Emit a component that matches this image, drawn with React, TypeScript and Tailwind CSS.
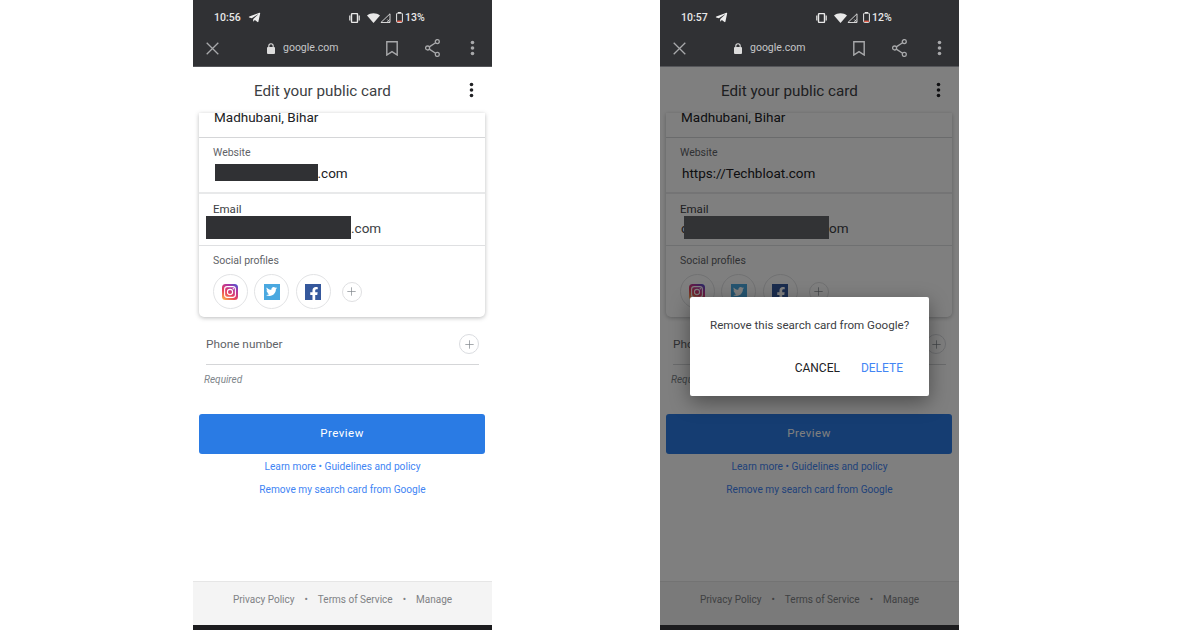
import { Plus } from "lucide-react";
import { FaFacebookF, FaTelegramPlane, FaTwitter } from "react-icons/fa";

function Dots({ className }: { className: string }) {
  return (
    <svg width="5" height="16" viewBox="0 0 5 16" className={className} fill="currentColor">
      <circle cx="2.5" cy="2.5" r="1.8" />
      <circle cx="2.5" cy="8" r="1.8" />
      <circle cx="2.5" cy="13.5" r="1.8" />
    </svg>
  );
}

function StatusIcons({ level }: { level: string }) {
  return (
    <div className="flex items-center text-[#e8e8e8]">
      <svg width="13" height="10" viewBox="0 0 13 10" fill="currentColor" className="mr-[6px]">
        <rect x="3.5" y="0.5" width="6" height="9" rx="1" fill="none" stroke="currentColor" strokeWidth="1.4" />
        <rect x="1.2" y="2.5" width="1.2" height="5" />
        <rect x="10.6" y="2.5" width="1.2" height="5" />
      </svg>
      <svg width="13" height="10" viewBox="0 0 13 10" fill="currentColor">
        <path d="M0 2.6C3.6-.6 9.4-.6 13 2.6L6.5 10z" />
      </svg>
      <svg width="11" height="10" viewBox="0 0 11 10" fill="none" stroke="currentColor" strokeWidth="0.9">
        <path d="M10 0.8V9.5H0.9z" />
        <path d="M7.2 6.4l2.4 2.6M9.6 6.4l-2.4 2.6" strokeWidth="0.7" />
      </svg>
      <svg width="7" height="11" viewBox="0 0 7 11" className="ml-[5px]">
        <rect x="0.6" y="1.2" width="5.8" height="9.2" rx="0.8" fill="none" stroke="currentColor" strokeWidth="1" />
        <rect x="2" y="0" width="3" height="1.2" fill="currentColor" />
        <rect x="1.2" y="8.6" width="4.6" height="1.4" fill="#e8604c" />
      </svg>
      <span className="ml-[2px] text-[10.5px] font-medium">{level}</span>
    </div>
  );
}

function Instagram({ id }: { id: string }) {
  return (
    <svg width="16" height="16" viewBox="0 0 16 16">
      <defs>
        <linearGradient id={id} x1="0.1" y1="1" x2="0.8" y2="0">
          <stop offset="0" stopColor="#fdb44b" />
          <stop offset="0.4" stopColor="#e8405a" />
          <stop offset="0.75" stopColor="#b5359f" />
          <stop offset="1" stopColor="#5b4fc9" />
        </linearGradient>
      </defs>
      <rect width="16" height="16" rx="3.5" fill={`url(#${id})`} />
      <rect x="2.6" y="2.6" width="10.8" height="10.8" rx="2.6" fill="none" stroke="#fff" strokeWidth="1.1" />
      <circle cx="8" cy="8" r="2.6" fill="none" stroke="#fff" strokeWidth="1.1" />
      <circle cx="11.3" cy="4.7" r="0.7" fill="#fff" />
    </svg>
  );
}

function SocialCircle({ children }: { children: React.ReactNode }) {
  return (
    <div className="flex h-[35px] w-[35px] items-center justify-center rounded-full border border-[#e2e3e5]">
      {children}
    </div>
  );
}

function Phone({
  time,
  level,
  website,
  email,
  dimmed,
}: {
  time: string;
  level: string;
  website: React.ReactNode;
  email: React.ReactNode;
  dimmed?: boolean;
}) {
  return (
    <div className="relative flex h-[630px] w-[299px] shrink-0 flex-col overflow-hidden bg-white">
      {/* Status bar and browser toolbar */}
      <div className="h-[67px] shrink-0 border-b border-[#55565a] bg-[#303134]">
        <div className="flex h-[34px] items-center pt-[1px] pl-[21px]">
          <span className="w-[26px] text-[10.5px] font-medium text-[#e8e8e8]">{time}</span>
          <FaTelegramPlane className="ml-[8px] text-[13px] text-[#efefef]" />
          <div className="ml-[87px]">
            <StatusIcons level={level} />
          </div>
        </div>
        <div className="flex h-[28px] items-center">
          <svg width="13" height="13" viewBox="0 0 13 13" className="ml-[13px] text-[#a8a9ab]" stroke="currentColor" strokeWidth="1.3" fill="none">
            <path d="M0.7 0.7l11.6 11.6M12.3 0.7L0.7 12.3" />
          </svg>
          <svg width="8" height="11" viewBox="0 0 8 11" className="ml-[48px] text-[#dcdcdc]" fill="currentColor">
            <rect x="0" y="4" width="8" height="7" rx="1" />
            <path d="M1.8 4.5V3a2.2 2.2 0 0 1 4.4 0v1.5" fill="none" stroke="currentColor" strokeWidth="1.1" />
          </svg>
          <span className="ml-[8px] w-[54px] whitespace-nowrap text-[10.5px] text-[#c4c5c7]">google.com</span>
          <svg width="12" height="15" viewBox="0 0 12 15" className="ml-[49px] text-[#a8a9ab]" stroke="currentColor" strokeWidth="1.4" fill="none">
            <path d="M0.8 0.8H11.2V14L6 10.6 0.8 14z" />
          </svg>
          <svg width="15" height="18" viewBox="0 0 15 18" className="ml-[27px] text-[#a8a9ab]" stroke="currentColor" strokeWidth="1.3" fill="none">
            <circle cx="12.3" cy="2.6" r="2" />
            <circle cx="2.6" cy="9" r="2" />
            <circle cx="12.3" cy="15.4" r="2" />
            <path d="M10.6 3.7L4.3 7.9M4.3 10.1l6.3 4.2" />
          </svg>
          <Dots className="ml-[30px] text-[#a8a9ab]" />
        </div>
      </div>

      {/* Page header */}
      <div className="flex h-[46px] shrink-0 items-center pl-[61px] pt-[2px]">
        <span className="w-[137px] whitespace-nowrap text-[15.2px] text-[#3c4043]">Edit your public card</span>
        <Dots className="ml-[78px] -mt-[2px] text-[#202124]" />
      </div>

      {/* Card */}
      <div className="ml-[6px] h-[204px] w-[286px] shrink-0 rounded-b-[5px] bg-white shadow-[0_1px_4px_rgba(60,64,67,0.35)]">
        <div className="h-[25px] overflow-hidden border-b border-[#d5d6d8] pl-[15px]">
          <p className="-mt-[1px] text-[13.5px] leading-[10px] text-[#202124]">Madhubani, Bihar</p>
        </div>
        <div className="relative h-[56px] border-b-2 border-[#e8e9ea] pl-[14px] pt-[8px]">
          <p className="text-[10.5px] leading-[14px] text-[#5f6368]">Website</p>
          {website}
        </div>
        <div className="relative h-[52px] border-b border-[#dfe0e2] pl-[14px] pt-[8px]">
          <p className="text-[11.5px] leading-[14px] text-[#3c4043]">Email</p>
          {email}
        </div>
        <div className="pl-[14px] pt-[8px]">
          <p className="text-[10.5px] leading-[14px] text-[#5f6368]">Social profiles</p>
          <div className="-ml-[0.5px] mt-[6px] flex items-center gap-[6.5px]">
            <SocialCircle>
              <Instagram id={`ig-${time}`} />
            </SocialCircle>
            <SocialCircle>
              <div className="flex h-[16px] w-[16px] items-center justify-center bg-[#4aa8e0]">
                <FaTwitter className="text-[11px] text-white" />
              </div>
            </SocialCircle>
            <SocialCircle>
              <div className="flex h-[16px] w-[16px] items-end justify-end overflow-hidden bg-[#35589c]">
                <FaFacebookF className="-mb-[1px] text-[14px] text-white" />
              </div>
            </SocialCircle>
            <div className="ml-[4.5px] flex h-[20px] w-[20px] items-center justify-center rounded-full border border-[#dfe0e2]">
              <Plus className="h-[13px] w-[13px] text-[#80868b]" strokeWidth={1.3} />
            </div>
          </div>
        </div>
      </div>

      {/* Phone field */}
      <div className="mx-[13px] mt-[6px] flex h-[42px] shrink-0 items-center justify-between border-b border-[#d5d6d8] pt-[1px]">
        <span className="pt-[1px] text-[11.8px] text-[#5f6368]">Phone number</span>
        <div className="flex h-[20px] w-[20px] items-center justify-center rounded-full border border-[#dadce0]">
          <Plus className="h-[13px] w-[13px] text-[#80868b]" strokeWidth={1.3} />
        </div>
      </div>
      <p className="ml-[11px] mt-[8px] text-[10px] leading-[14px] text-[#80868b] italic">Required</p>

      {/* Actions */}
      <button className="ml-[6px] mt-[27px] flex h-[39.5px] w-[286px] shrink-0 items-center justify-center rounded-[3px] bg-[#2a7be4] text-[11.5px] tracking-[0.5px] text-white">
        Preview
      </button>
      <p className="mt-[6.5px] text-center text-[10.2px] leading-[14px] text-[#4285f4]">Learn more • Guidelines and policy</p>
      <p className="mt-[9px] text-center text-[10.15px] leading-[14px] text-[#4285f4]">Remove my search card from Google</p>

      {/* Footer */}
      <div className="mt-auto flex h-[44px] shrink-0 items-center justify-center gap-[10px] border-t border-[#e6e6e6] bg-[#f4f4f4] pb-[8px] text-[10px] text-[#808285]">
        <span>Privacy Policy</span>
        <span>•</span>
        <span>Terms of Service</span>
        <span>•</span>
        <span>Manage</span>
      </div>
      <div className="h-[5px] shrink-0 bg-[#1c1c1e]" />

      {dimmed && (
        <>
          <div className="absolute inset-x-0 top-[67px] bottom-[5px] bg-black/50" />
          <div className="absolute left-[30px] top-[297px] h-[99px] w-[239px] rounded-[2px] bg-white shadow-[0_6px_20px_rgba(0,0,0,0.4)]">
            <p className="pl-[20px] pt-[20px] text-[11.6px] leading-[16px] text-[#3c4043]">
              Remove this search card from Google?
            </p>
            <div className="mt-[27px] flex justify-end gap-[21px] pr-[26px] text-[12px] leading-[16px] text-[#202124]">
              <span>CANCEL</span>
              <span className="text-[#4285f4]">DELETE</span>
            </div>
          </div>
        </>
      )}
    </div>
  );
}

export default function App() {
  return (
    <div className="flex h-[630px] w-[1200px] gap-[168px] overflow-hidden bg-white pl-[193px] font-['Roboto',sans-serif]">
      <Phone
        time="10:56"
        level="13%"
        website={
          <>
            <p className="pl-[104.5px] pt-[5px] text-[13.5px] leading-[16px] text-[#202124]">.com</p>
            <div className="absolute left-[16px] top-[26px] h-[17px] w-[103px] bg-[#303134]" />
          </>
        }
        email={
          <>
            <p className="pl-[138px] pt-[4px] text-[13.5px] leading-[16px] text-[#3c4043]">.com</p>
            <div className="absolute left-[7px] top-[22px] h-[23px] w-[145px] bg-[#303134]" />
          </>
        }
      />
      <Phone
        time="10:57"
        level="12%"
        dimmed
        website={<p className="pl-[2px] pt-[5px] text-[13.5px] leading-[16px] text-[#202124]">https://Techbloat.com</p>}
        email={
          <>
            <p className="pl-[1px] pt-[4px] text-[13.5px] leading-[16px] text-[#3c4043]">
              c<span className="pl-[141px]">om</span>
            </p>
            <div className="absolute left-[18px] top-[22px] h-[23px] w-[145px] bg-[#65666a]" />
          </>
        }
      />
    </div>
  );
}
